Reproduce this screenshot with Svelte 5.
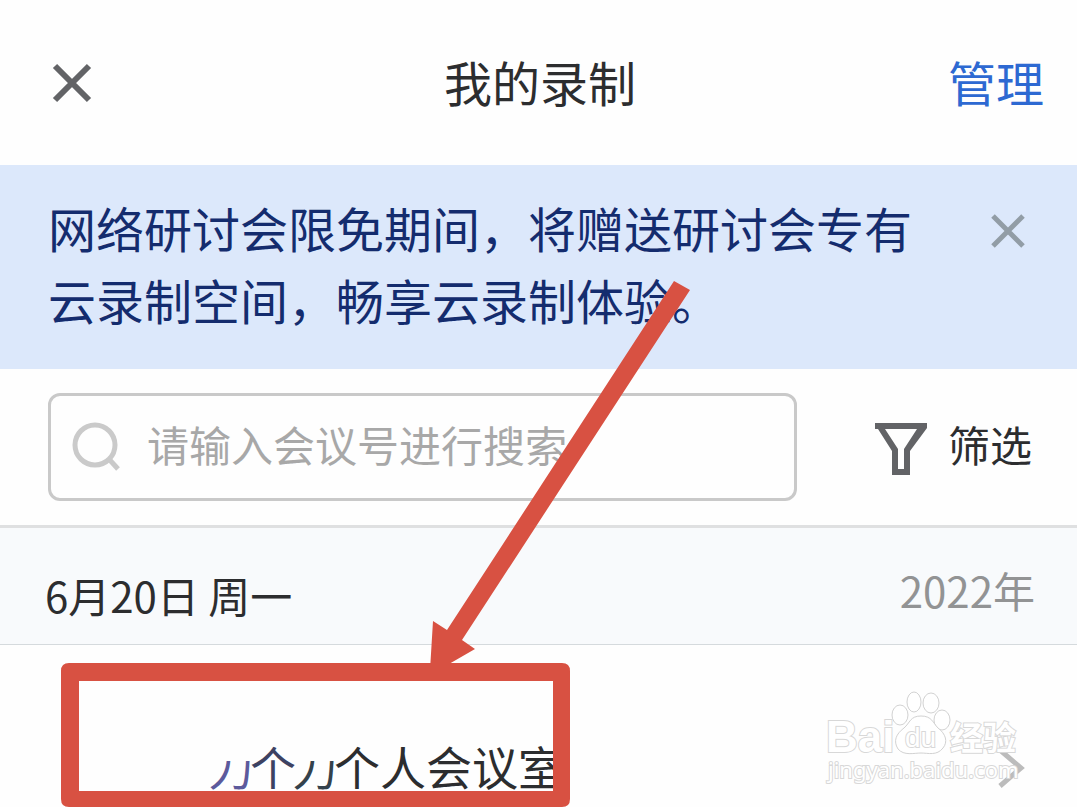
<!-- Recordings list: header, notice, search, day group, first recording -->

<script>
  let keyword = "";
  let showNotice = true;

  const group = { date: "6月20日 周一", year: "2022年" };
</script>

<div class="page">
  <header class="topbar">
    <button class="icon-btn" aria-label="关闭">
      <svg width="48" height="48" viewBox="0 0 48 48">
        <path d="M7 9 L41 43 M41 9 L7 43" stroke="#626366" stroke-width="6" />
      </svg>
    </button>
    <h1>我的录制</h1>
    <button class="manage">管理</button>
  </header>

  {#if showNotice}
    <section class="notice">
      <p>网络研讨会限免期间，将赠送研讨会专有云录制空间，畅享云录制体验。</p>
      <button class="icon-btn" aria-label="关闭提示" on:click={() => (showNotice = false)}>
        <svg width="42" height="80" viewBox="0 0 42 80">
          <path d="M6 25 L36 55 M36 25 L6 55" stroke="#929da6" stroke-width="5" />
        </svg>
      </button>
    </section>
  {/if}

  <section class="tools">
    <label class="search">
      <svg width="54" height="54" viewBox="0 0 54 54">
        <circle cx="23" cy="25" r="20" fill="none" stroke="#cacaca" stroke-width="5" />
        <path d="M36 38 L46 49" stroke="#cacaca" stroke-width="5" />
      </svg>
      <input type="text" aria-label="搜索会议号" placeholder="请输入会议号进行搜索" bind:value={keyword} />
    </label>
    <button class="filter">
      <svg width="52" height="62" viewBox="0 0 52 62">
        <path
          d="M0 10 H52 V15 L35 38 V62 H17 V38 L3 16 H0 Z M10 16 L23 36 V56 H29 V36 L42 16 Z"
          fill="#626366"
          fill-rule="evenodd"
        />
      </svg>
      筛选
    </button>
  </section>

  <div class="day">
    <h2>{group.date}</h2>
    <span>{group.year}</span>
  </div>

  <a class="recording" href="#room">
    <span class="name">
      <span class="cut">力</span><span class="tint">个</span><span class="cut dark">力</span><span>个人会议室</span>
    </span>
    <svg class="chevron" width="30" height="44" viewBox="0 0 30 44">
      <path d="M3 4 L24 22 L3 40" fill="none" stroke="#bcbcbc" stroke-width="5" />
    </svg>
  </a>

  <svg class="watermark" width="200" height="104" viewBox="0 0 200 104">
    <g fill="#fff" stroke="#d2d2d2" stroke-width="1">
      <ellipse cx="76" cy="27" rx="8" ry="10" />
      <ellipse cx="90" cy="14" rx="7" ry="10" />
      <ellipse cx="107" cy="15" rx="8" ry="10" />
      <ellipse cx="118" cy="32" rx="8" ry="10" />
      <path d="M97 28 C108 28 109 35 114 40 C122 46 124 54 119 60 C113 68 104 65 97 65 C90 65 80 68 74 61 C69 53 72 46 80 40 C86 35 86 28 97 28 Z" />
    </g>
    <g class="outlined">
      <text class="bai" x="2" y="64">Bai</text>
      <text class="du" x="81" y="59">du</text>
      <text class="cjk" x="126" y="62">经验</text>
      <text class="url" x="4" y="90">jingyan.baidu.com</text>
    </g>
  </svg>

  <!-- pointer and box marking the first recording -->
  <svg class="marker" width="700" height="807" viewBox="0 0 700 807">
    <path d="M674 281 L690 290 L462 640 L475 649 L449 664 L430 670 L433 621 L447 630 Z" fill="#d85142" />
    <path
      d="M69 663 H562 Q570 663 570 671 V799 Q570 807 562 807 H69 Q61 807 61 799 V671 Q61 663 69 663 Z M79 681 V791 H553 V681 Z"
      fill="#d85142"
      fill-rule="evenodd"
    />
  </svg>
</div>

<style>
  :global(body) {
    margin: 0;
    background: #fefefe;
  }

  .page {
    position: relative;
    overflow: hidden;
    min-height: 100vh;
    font-family: "Noto Sans CJK SC", sans-serif;
    color: #2c2d2f;
  }

  button {
    padding: 0;
    border: none;
    background: none;
    font: inherit;
    color: inherit;
    cursor: pointer;
  }

  svg {
    display: block;
    flex: none;
  }

  h1,
  h2,
  p {
    margin: 0;
    font-weight: 400;
  }

  .topbar {
    display: grid;
    grid-template-columns: 1fr auto 1fr;
    align-items: center;
    box-sizing: border-box;
    height: 165px;
    padding: 0 33px 4px 48px;
  }

  .topbar .icon-btn {
    justify-self: start;
  }

  h1 {
    padding-right: 12px;
    font-size: 48px;
    line-height: 72px;
  }

  .manage {
    justify-self: end;
    font-size: 48px;
    line-height: 72px;
    color: #2d69d2;
  }

  .notice {
    display: flex;
    align-items: flex-start;
    justify-content: space-between;
    gap: 72px;
    padding: 26px 48px 34px;
    background: #dce8fb;
    color: #142c6e;
  }

  .notice p {
    font-size: 48px;
    line-height: 72px;
  }

  .tools {
    display: flex;
    align-items: center;
    gap: 78px;
    padding: 24px 45px 24px 48px;
    border-bottom: 3px solid #dfe0e1;
  }

  .search {
    display: flex;
    flex: 1;
    align-items: center;
    gap: 21px;
    box-sizing: border-box;
    height: 108px;
    padding: 0 21px;
    border: 3px solid #c9c9c9;
    border-radius: 12px;
  }

  .search input {
    flex: 1;
    min-width: 0;
    padding: 0 0 6px;
    border: none;
    outline: none;
    background: transparent;
    font: inherit;
    font-size: 42px;
    line-height: 60px;
  }

  .search input::placeholder {
    color: #a8a8a8;
    opacity: 1;
  }

  .filter {
    display: flex;
    align-items: center;
    gap: 21px;
    padding-bottom: 6px;
    font-size: 42px;
    line-height: 60px;
  }

  .day {
    display: flex;
    align-items: flex-start;
    justify-content: space-between;
    padding: 32px 42px 14px 45px;
    border-bottom: 1px solid #d5dadd;
    background: #f8fafc;
    font-size: 42px;
  }

  .day h2 {
    font-size: 42px;
    line-height: 70px;
  }

  .day span {
    line-height: 60px;
    color: #929394;
  }

  .recording {
    display: flex;
    align-items: center;
    justify-content: space-between;
    padding: 88px 50px 4px 208px;
    color: inherit;
    text-decoration: none;
  }

  .name {
    display: flex;
    align-items: center;
    padding-bottom: 6px;
    font-size: 46px;
    line-height: 64px;
  }

  .cut,
  .tint {
    margin-right: -4px;
    color: #3d4262;
  }

  .cut {
    color: #5c5a9c;
    clip-path: inset(28px 0 0 0);
  }

  .dark {
    color: #34424c;
  }

  .watermark {
    position: absolute;
    top: 688px;
    right: 53px;
    pointer-events: none;
  }

  .outlined {
    fill: #fff;
    stroke: #d8d8d8;
    stroke-width: 2px;
    paint-order: stroke;
  }

  .bai {
    font: 700 44px "Liberation Sans", sans-serif;
  }

  .du {
    font: 400 28px "Liberation Sans", sans-serif;
  }

  .cjk {
    font: 700 33px "Noto Sans CJK SC", sans-serif;
  }

  .url {
    font: 400 22px "Noto Sans", sans-serif;
  }

  .marker {
    position: absolute;
    top: 0;
    left: 0;
    pointer-events: none;
  }
</style>
